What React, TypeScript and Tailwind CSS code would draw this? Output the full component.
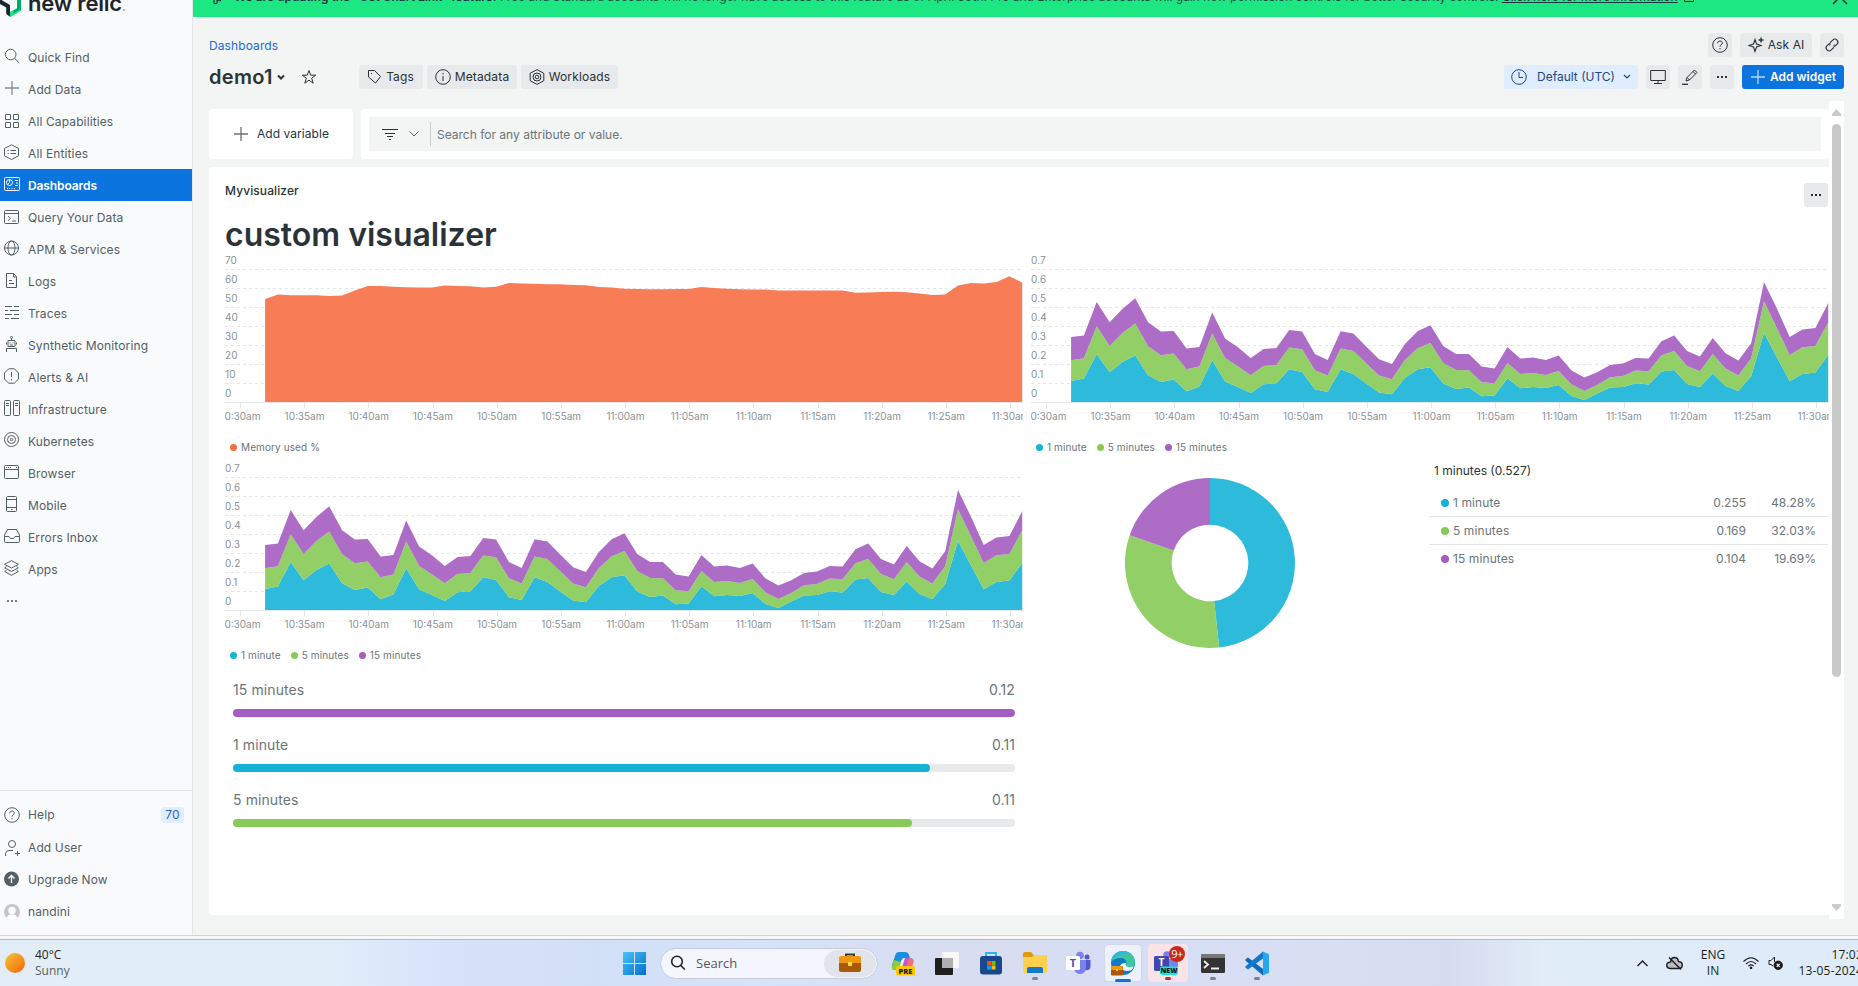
import React from "react";

type IconProps = { children: React.ReactNode; size?: number; className?: string };

const Icon = ({ children, size = 16, className = "" }: IconProps) => (
  <svg
    width={size}
    height={size}
    viewBox="0 0 16 16"
    fill="none"
    stroke="currentColor"
    strokeWidth="1"
    className={"shrink-0 " + className}
  >
    {children}
  </svg>
);

const icons: Record<string, React.ReactNode> = {
  search: (
    <>
      <circle cx="6.7" cy="6.5" r="5.3" />
      <path d="m10.6 10.5 4.6 4.3" />
    </>
  ),
  plus: <path d="M8 1v14M1 8h14" strokeWidth="1.3" opacity=".7" />,
  grid: <path d="M1.5 2.5h5v5h-5zM9.5 2.5h5v5h-5zM1.5 10.5h5v5h-5zM9.5 10.5h5v5h-5z" />,
  entities: (
    <>
      <path d="m7.5.8 7 3.600v7.400l-7 3.700-7-3.700V4.400z" />
      <path d="M6.500 6.500H12M6.500 9.500H12M3.500 6.500h1.300M3.500 9.500h1.300" />
    </>
  ),
  dashboards: (
    <>
      <rect x=".5" y="1.500" width="15" height="13" rx="1" />
      <circle cx="5.500" cy="6.500" r="3" />
      <path d="M5.500 3.500v3l-2 2M11 4.500h3M12 7h2M11 9.500h3M3 12.500h1M5 12.500h1M7.500 12.500h1M10 12.500h1" />
    </>
  ),
  query: (
    <>
      <rect x=".5" y="2.500" width="14" height="13" rx="1" />
      <path d="M.5 5.500h14M4 8l2.500 2.300L4 12.600M8 13h4" />
    </>
  ),
  globe: (
    <>
      <circle cx="7.500" cy="8" r="7" />
      <ellipse cx="7.500" cy="8" rx="3.500" ry="7" />
      <path d="M.5 8h14" />
    </>
  ),
  logs: <path d="M9.500 1.500h-7v14h10v-11zM9.500 1.500v3.500h3M5 8.500h3M5 11.500h5" />,
  traces: <path d="M1 2.500h7M10 2.500h5M1 6.500h3M6 6.500h9M1 10.500h7M10 10.500h5M1 14.500h4M7 14.500h8" />,
  synthetic: (
    <>
      <circle cx="7.500" cy="1.500" r="1" />
      <path d="M7.500 2.500v2M4 4.500h7v6H4zM2.500 6.500v2M12.500 6.500v2M6 6.500v1M9 6.500v1M6 9h3M2.500 16v-3.500h10V16" />
    </>
  ),
  alert: (
    <>
      <path d="m4.700.8h5.600l4.200 4.200v6l-4.200 4.200H4.700L.5 11V5z" />
      <path d="M7.500 4v5M7.500 11v1.500" />
    </>
  ),
  infra: (
    <>
      <rect x=".5" y=".5" width="6" height="15" rx="1" />
      <rect x="9.500" y=".5" width="6" height="15" rx="1" />
      <path d="M2 3.500h3M2 5.500h3M11 3.500h3M11 5.500h3" />
    </>
  ),
  kube: (
    <>
      <circle cx="7.500" cy="7.500" r="7" />
      <circle cx="7.500" cy="7.500" r="4" />
      <circle cx="7.500" cy="7.500" r="1.200" />
    </>
  ),
  browser: (
    <>
      <rect x=".5" y="1.500" width="14" height="13" rx="1" />
      <path d="M.5 5.500h14M2 3.500h1M4 3.500h1M6 3.500h1M12 3.500h1" />
    </>
  ),
  mobile: (
    <>
      <rect x="2.500" y=".5" width="10" height="15" rx="1" />
      <path d="M2.500 3.500h10M2.500 11.500h10M7 13.500h1.500" />
    </>
  ),
  inbox: <path d="M3.500 1.500h9L15.500 7v6.500q0 1-1 1h-13q-1 0-1-1V7zM.5 8.500h4.500l1.500 2h3l1.500-2h4.500" />,
  apps: (
    <path d="m7.500.6 7 3.700-7 3.700-7-3.700zM2.500 6.500.700 7.800l6.800 3.700 6.800-3.700-1.800-1.300M2.500 10.200.700 11.500l6.800 3.900 6.800-3.900-1.800-1.300" />
  ),
  question: (
    <>
      <circle cx="8" cy="8" r="7.3" />
      <path d="M5.700 6.300C5.700 4.900 6.600 4 8 4s2.300.9 2.300 2.100c0 1.600-2.300 1.800-2.300 3.400v.3M8 11v1.300" />
    </>
  ),
  userPlus: (
    <>
      <circle cx="8" cy="4" r="3.500" />
      <path d="M1.500 16v-2.500Q1.500 11 5 10.500h4M13.500 11v5M11 13.500h5" />
    </>
  ),
};

const navItems: [string, string][] = [
  ["search", "Quick Find"],
  ["plus", "Add Data"],
  ["grid", "All Capabilities"],
  ["entities", "All Entities"],
  ["dashboards", "Dashboards"],
  ["query", "Query Your Data"],
  ["globe", "APM & Services"],
  ["logs", "Logs"],
  ["traces", "Traces"],
  ["synthetic", "Synthetic Monitoring"],
  ["alert", "Alerts & AI"],
  ["infra", "Infrastructure"],
  ["kube", "Kubernetes"],
  ["browser", "Browser"],
  ["mobile", "Mobile"],
  ["inbox", "Errors Inbox"],
  ["apps", "Apps"],
];

const Dots = ({ className = "" }: { className?: string }) => (
  <svg width="10" height="2" viewBox="0 0 10 2" fill="currentColor" className={className}>
    <path d="M0 0h2v2H0zM4 0h2v2H4zM8 0h2v2H8z" />
  </svg>
);

const Sidebar = () => (
  <aside className="flex w-[193px] shrink-0 flex-col border-r border-[#e3e5e6] bg-[#f9fafc] text-[12px] tracking-[0.12px] text-[#535e65]">
    <div className="flex h-[41px] gap-[7px] overflow-hidden">
      <svg width="21" height="24" viewBox="0 0 21 24" className="mt-[-7px] shrink-0">
        <path d="M21 0v17.500L10 24v-4.700l7-4V0z" fill="#00ac69" />
        <path d="M21 16v1.500L10 24v-4.700l3.500-2v2.900z" fill="#1ce783" />
        <path d="M0 6.500V11l6.200 3.500V21L10 23.800V12L1.500 7z" fill="#1d252c" />
      </svg>
      <span className="mt-[-13px] h-8 text-[22px] leading-8 font-semibold tracking-[-0.2px] whitespace-nowrap text-[#1d252c]">
        new relic<span className="text-[12px] text-[#8e9494]">.</span>
      </span>
    </div>
    <nav className="flex flex-col">
      {navItems.map(([icon, label]) => (
        <a
          key={label}
          className={
            label === "Dashboards"
              ? "flex h-8 w-[192px] items-center gap-2 bg-[#0c74df] pl-1 font-semibold tracking-[-0.1px] text-white"
              : "flex h-8 w-[192px] items-center gap-2 pl-1"
          }
        >
          <Icon className="-mt-0.5">{icons[icon]}</Icon>
          <span className="pt-px">{label}</span>
        </a>
      ))}
    </nav>
    <Dots className="mt-[15px] ml-[7px] opacity-80" />
    <div className="mt-auto flex h-[145px] flex-col border-t border-[#e3e5e6] pt-2">
      <div className="mb-px flex h-8 items-center gap-2 pl-1">
        <Icon>{icons.question}</Icon>
        <span>Help</span>
        <span className="mr-2 ml-auto flex h-4 w-[23px] items-center justify-center rounded-[3px] bg-[#e0edff] text-[#2a66c8]">70</span>
      </div>
      <div className="flex h-8 items-center gap-2 pl-1">
        <Icon>{icons.userPlus}</Icon>
        <span>Add User</span>
      </div>
      <div className="flex h-8 items-center gap-2 pl-1">
        <Icon className="-mt-0.5">
          <circle cx="7.500" cy="8" r="7.500" fill="#535e65" stroke="none" />
          <path d="M7.500 12V5M4.500 7.500l3-3 3 3" stroke="#fff" strokeWidth="1.300" />
        </Icon>
        <span>Upgrade Now</span>
      </div>
      <div className="flex h-8 items-center gap-2 pl-1">
        <Icon className="rounded-full">
          <rect width="16" height="16" fill="#c4c6c8" stroke="none" />
          <circle cx="8" cy="6.500" r="3.700" fill="#fff" stroke="none" />
          <path d="M2 16q.5-4.500 4-5.500h4q3.500 1 4 5.500z" fill="#fff" stroke="none" />
        </Icon>
        <span>nandini</span>
      </div>
    </div>
  </aside>
);

const memory = [
  54.4, 56.7, 56.3, 56.3, 56.3, 55.9, 56.2, 58.8, 61.2, 61.2, 60.8, 60.6, 60.5, 60.5, 61.4, 61.2, 61.1, 60.5, 60.8, 62.8,
  62.6, 62.4, 62.1, 62.1, 61.7, 61.6, 60.7, 60.4, 59.8, 59.6, 59.5, 59.5, 59.6, 59.7, 60.7, 60.2, 59.8, 59.5, 59.3, 59.3,
  58.9, 58.9, 58.9, 58.8, 58.8, 58.9, 57.7, 57.8, 58.1, 58.2, 57.9, 57.2, 56.5, 56.8, 61.4, 62.8, 62.5, 63.3, 66.3, 63,
];

// Running totals for each minute: [1 minute, + 5 minutes, + 15 minutes], where 570 is a load of 1.
const load: [number, number, number][] = [
  [64, 126, 196], [71, 132, 200], [145, 228, 301], [90, 169, 240], [121, 208, 280], [140, 236, 312], [81, 168, 240],
  [61, 141, 212], [68, 146, 214], [33, 99, 161], [47, 107, 166], [126, 206, 269], [62, 133, 191], [46, 108, 165],
  [28, 81, 133], [54, 109, 160], [57, 112, 163], [99, 164, 217], [91, 159, 212], [39, 96, 145], [31, 80, 127],
  [99, 161, 213], [85, 154, 206], [56, 117, 167], [29, 80, 129], [24, 69, 115], [73, 126, 174], [99, 162, 213],
  [105, 178, 231], [56, 118, 169], [40, 97, 145], [44, 96, 145], [18, 60, 107], [20, 57, 101], [72, 118, 166],
  [42, 85, 131], [46, 88, 134], [43, 82, 127], [52, 94, 140], [19, 53, 95], [7, 34, 74], [26, 52, 90], [44, 75, 112],
  [46, 79, 116], [57, 95, 133], [53, 93, 131], [92, 141, 183], [97, 154, 200], [55, 109, 154], [46, 93, 137],
  [86, 145, 193], [49, 101, 147], [34, 80, 125], [79, 132, 177], [208, 303, 361], [135, 223, 281], [63, 142, 196],
  [85, 165, 218], [89, 169, 223], [142, 240, 297],
];

const BASE = 152.3;
const xAt = (i: number) => 14.4 + (i + 2) * 12.833;
const times = [
  "10:30am", "10:35am", "10:40am", "10:45am", "10:50am", "10:55am", "11:00am",
  "11:05am", "11:10am", "11:15am", "11:20am", "11:25am", "11:30am",
];

type Layer = { color: string; upper: number[]; lower: number[] };

const zero = load.map(() => 0);
const memoryLayers: Layer[] = [{ color: "#f76e43", upper: memory.map((v) => v * 1.9), lower: zero }];
const loadLayers: Layer[] = ["#17b3d6", "#86cb57", "#a45dc0"].map((color, k) => ({
  color,
  upper: load.map((p) => p[k] / 3),
  lower: k === 0 ? zero : load.map((p) => p[k - 1] / 3),
}));

const layerPath = ({ upper, lower }: Layer) => {
  const up = upper.map((v, i) => `${xAt(i).toFixed(1)},${(BASE - v).toFixed(1)}`);
  const down = lower.map((v, i) => `${xAt(i).toFixed(1)},${(BASE - v).toFixed(1)}`).reverse();
  return "M" + up.concat(down).join("L") + "Z";
};

type ChartProps = { labels: string[]; layers: Layer[]; legend: [string, string][] };

const AreaChart = ({ labels, layers, legend }: ChartProps) => (
  <div className="h-[208px] w-[798px] overflow-hidden">
    <svg width="798" height="180" viewBox="0 0 798 180" className="block font-['Inter',sans-serif]" fill="#8a9296" fontSize="10">
      {labels.map((label, i) => (
        <g key={label}>
          {i < 7 && <path d={`M0 ${19.5 + i * 19}H798`} stroke="#e3e5e6" strokeDasharray="3 3" />}
          <text x="0" y={14 + i * 19} letterSpacing=".1">{label}</text>
        </g>
      ))}
      {layers.map((layer) => (
        <path key={layer.color} d={layerPath(layer)} fill={layer.color} fillOpacity=".9" />
      ))}
      <path d="M0 152.500H798" stroke="#e3e5e6" />
      {times.map((time, i) => (
        <g key={time}>
          <path d={`M${Math.round(15 + i * 64.17) + 0.5} 153v5`} stroke="#e3e5e6" />
          <text x={15.4 + i * 64.17} y="170" textAnchor="middle">{time}</text>
        </g>
      ))}
    </svg>
    <div className="flex h-[34px] items-center gap-2.5 pl-[5px] text-[10px] tracking-[0.1px] text-[#6b757a]">
      {legend.map(([name, color]) => (
        <span key={name} className="flex items-center gap-1">
          <span className="h-[7px] w-[7px] rounded-full" style={{ backgroundColor: color }} />
          {name}
        </span>
      ))}
    </div>
  </div>
);

const loadLegend: [string, string][] = [
  ["1 minute", "#17b3d6"],
  ["5 minutes", "#86cb57"],
  ["15 minutes", "#a45dc0"],
];
const loadLabels = ["0.7", "0.6", "0.5", "0.4", "0.3", "0.2", "0.1", "0"];

const slices = [
  { name: "1 minute", color: "#17b3d6", value: "0.255", share: 48.28 },
  { name: "5 minutes", color: "#86cb57", value: "0.169", share: 32.03 },
  { name: "15 minutes", color: "#a45dc0", value: "0.104", share: 19.69 },
];

const slicePath = (from: number, to: number) => {
  const point = (share: number, r: number) => {
    const a = (share / 100) * Math.PI * 2;
    return `${(86 + r * Math.sin(a)).toFixed(2)} ${(86 - r * Math.cos(a)).toFixed(2)}`;
  };
  return `M${point(from, 85)}A85 85 0 0 1 ${point(to, 85)}L${point(to, 38.3)}A38.3 38.3 0 0 0 ${point(from, 38.3)}Z`;
};

const PiePanel = () => {
  let start = 0;
  return (
    <div className="flex h-[208px] w-[798px]">
      <div className="flex w-[398px] shrink-0 pt-[19px] pl-[93px]">
        <svg width="172" height="172" viewBox="0 0 172 172">
          {slices.map((s) => {
            const from = start;
            start += s.share;
            return <path key={s.name} d={slicePath(from, start)} fill={s.color} fillOpacity=".9" />;
          })}
        </svg>
      </div>
      <div className="flex grow flex-col pt-[5px] pr-px text-[12px] text-[#6b757a]">
        <div className="mb-[10px] h-4 pl-[5px] leading-4 text-[#293338]">1 minutes (0.527)</div>
        {slices.map((s, i) => (
          <div
            key={s.name}
            className={
              i < 2
                ? "flex h-7 items-center border-b border-[#e3e5e6] pt-px pr-3 pl-3"
                : "flex h-7 items-center pr-3 pl-3"
            }
          >
            <span className="mr-1 h-2 w-2 rounded-full" style={{ backgroundColor: s.color }} />
            <span className="grow tracking-[0.1px]">{s.name}</span>
            <span className="w-[60px] text-right">{s.value}</span>
            <span className="w-[70px] text-right">{s.share.toFixed(2)}%</span>
          </div>
        ))}
      </div>
    </div>
  );
};

const bars = [
  { name: "15 minutes", value: "0.12", width: 782, color: "#a45dc0" },
  { name: "1 minute", value: "0.11", width: 697, color: "#17b3d6" },
  { name: "5 minutes", value: "0.11", width: 679, color: "#86cb57" },
];

const BarPanel = () => (
  <div className="flex w-[798px] flex-col pt-[13px] pl-2">
    {bars.map((b) => (
      <div key={b.name} className="flex h-[55px] w-[782px] flex-col">
        <div className="flex h-[30px] items-center justify-between pb-[9px] text-[14px] tracking-[0.1px] text-[#6b757a]">
          <span>{b.name}</span>
          <span>{b.value}</span>
        </div>
        <div className="h-2 overflow-hidden rounded-full bg-[#e7e9ea]">
          <div className="h-2 rounded-r-full" style={{ width: b.width, backgroundColor: b.color }} />
        </div>
      </div>
    ))}
  </div>
);

const btn = "flex h-6 items-center justify-center rounded-[3px] bg-[#e7e9ea] text-[#293338]";

const Header = () => (
  <header className="flex h-[84px] shrink-0 flex-col gap-2 pt-4 pr-[14px] pl-4 text-[12px] text-[#293338]">
    <div className="flex h-6 items-center">
      <a className="pt-0.5 tracking-[0.1px] text-[#1a6bd6]">Dashboards</a>
      <div className="ml-auto flex gap-2">
        <span className={btn + " w-6"}><Icon className="mr-px">{icons.question}</Icon></span>
        <span className={btn + " w-[72px] gap-1 tracking-[0.1px]"}>
          <Icon>
            <path d="M7 2.500 8.500 7 13 8.500 8.500 10 7 14.500 5.500 10 1 8.500 5.500 7z" strokeWidth="1.100" />
            <path d="M13 .5v5M10.500 3h5" strokeWidth="1.400" />
          </Icon>
          Ask AI
        </span>
        <span className={btn + " w-6"}>
          <Icon className="mr-px">
            <g transform="rotate(-45 8 8)" strokeWidth="1.100">
              <path d="M7 5H4a3 3 0 0 0 0 6h3a3 3 0 0 0 2.800-2" />
              <path d="M9 11h3a3 3 0 0 0 0-6H9a3 3 0 0 0-2.800 2" />
            </g>
          </Icon>
        </span>
      </div>
    </div>
    <div className="flex h-6 items-center">
      <h1 className="w-[64px] text-[20px] font-semibold tracking-[0.3px] whitespace-nowrap">demo1</h1>
      <svg width="8" height="6" viewBox="0 0 8 6" className="ml-1" fill="none" stroke="#293338" strokeWidth="2"><path d="m1 1.500 3 3 3-3" /></svg>
      <Icon className="ml-4"><path d="m8 1.500 1.700 4.700h5l-4 3 1.500 5L8 11.200l-4.200 3 1.500-5-4-3h5z" /></Icon>
      <div className="ml-[42px] flex gap-1">
        <span className={btn + " w-[64px] gap-[4px] pr-0.5 tracking-[0.1px]"}>
          <Icon>
            <path d="M2.500 1.500h6l6 6-5 6.500-7-6z" strokeLinejoin="round" />
            <path d="M5 4.500h1" />
          </Icon>
          Tags
        </span>
        <span className={btn + " w-[90px] gap-1 tracking-[0.15px]"}>
          <Icon><circle cx="8" cy="8" r="7.300" /><path d="M8 7v5M8 4v1.500" /></Icon>
          Metadata
        </span>
        <span className={btn + " w-[97px] gap-1 tracking-[0.15px]"}>
          <Icon><path d="m8 .6 6.800 3.700v7.400L8 15.400 1.200 11.700V4.300z" /><circle cx="8" cy="8" r="4" /><circle cx="8" cy="8" r="1.800" /></Icon>
          Workloads
        </span>
      </div>
      <div className="ml-auto flex gap-2">
        <span className="flex h-6 w-[134px] items-center rounded-[3px] bg-[#e0edff] pl-[7px] text-[#1d4a85]">
          <Icon className="mr-[10px]"><circle cx="8" cy="8" r="7.300" /><path d="M8 3v5.500h4" /></Icon>
          Default (UTC)
          <svg width="8" height="6" viewBox="0 0 8 6" className="ml-[8px]" fill="none" stroke="currentColor" strokeWidth="1.200"><path d="m1 1 3 3 3-3" /></svg>
        </span>
        <span className={btn + " w-6"}><Icon><path d="M.7 1.500h14.600v10H.7zM8 11.500v3M4 14.500h8" /></Icon></span>
        <span className={btn + " w-6"}><Icon><path d="m4 12 1-3.500 7.500-7.500 2.500 2.500L7.500 11zM11 2.500 13.500 5M5 8.500 7.500 11" /><path d="M0 15.300h6" strokeWidth="1.300" /></Icon></span>
        <span className={btn + " w-6"}><Dots /></span>
        <span className="flex h-6 w-[102px] items-center gap-1 rounded-[3px] bg-[#0c74df] pl-2 font-semibold text-white">
          <Icon>{icons.plus}</Icon>
          Add widget
        </span>
      </div>
    </div>
  </header>
);

const Banner = () => (
  <div className="flex h-[17px] shrink-0 items-start overflow-hidden bg-[#1ce783] text-[12px] tracking-[-0.015px] text-[#1d4d3c]">
    <div className="mt-[-11px] flex h-4 w-full items-center leading-4 whitespace-nowrap">
      <Icon className="ml-[17px] text-[#1d252c]"><path d="M1.500 9.500v-5l9-3v10.500l-9-3M4 10.500v4h3v-3.500M13 5h2M13 8l2 1.500" /></Icon>
      <span className="ml-2">
        <b className="font-semibold text-[#1d353c]">We are updating the "Get Chart Link" feature.</b>{" "}
        Free and Standard accounts will no longer have access to this feature as of April 30th. Pro and Enterprise accounts
        will gain new permission controls for better security controls.{" "}
        <span className="text-[#1d353c] underline">Click here for more information</span>
      </span>
      <svg width="10" height="10" viewBox="0 0 10 10" className="ml-[6px]" fill="none" stroke="#1d252c"><path d="M.5.500h9v9h-9z" /></svg>
      <Icon className="mr-[10px] ml-auto text-[#1d252c]"><path d="M1 1l14 14M15 1 1 15" strokeWidth="1.400" /></Icon>
    </div>
  </div>
);

const Scrollbar = () => (
  <div className="flex h-[818px] w-[15px] shrink-0 flex-col items-center bg-white pt-2 pb-2">
    <svg width="9" height="7" viewBox="0 0 9 7" fill="#c9cacb"><path d="M4.500 0 9 5v2H0V5z" /></svg>
    <div className="mt-2 h-[553px] w-[9px] rounded-full bg-[#c9c9c9]" />
    <svg width="9" height="7" viewBox="0 0 9 7" fill="#c9cacb" className="mt-auto"><path d="M4.500 7 9 2V0H0v2z" /></svg>
  </div>
);

const Content = () => (
  <div className="flex h-[818px] pl-4">
    <div className="flex w-[1620px] shrink-0 flex-col gap-2 pt-2 text-[#293338]">
      <div className="flex h-[50px] gap-2">
        <div className="flex w-[144px] items-center rounded bg-white pl-6 text-[12px] tracking-[0.05px]">
          <Icon className="mr-2">{icons.plus}</Icon>
          Add variable
        </div>
        <div className="grow rounded bg-white p-2">
          <div className="flex h-[34px] items-center bg-[#f3f4f4] pl-[13px]">
            <Icon><path d="M0 3.500h16M3 7.500h10M5 10.500h6M7 13.500h2" strokeWidth="1.200" /></Icon>
            <svg width="10" height="6" viewBox="0 0 10 6" className="ml-[11px]" fill="none" stroke="#535e65"><path d="m.5.5 4.500 4.500L9.500.500" /></svg>
            <span className="ml-[11px] h-6 w-px bg-[#c9cdcf]" />
            <span className="ml-1.5 pt-px text-[12px] text-[#6b757a]">Search for any attribute or value.</span>
          </div>
        </div>
      </div>
      <section className="flex h-[748px] flex-col rounded-l bg-white pl-4">
        <div className="flex h-10 items-start justify-between pt-4 pr-px">
          <span className="h-4 text-[12px] leading-4 font-medium tracking-[0.1px]">Myvisualizer</span>
          <span className={btn + " w-6"}><Dots /></span>
        </div>
        <h2 className="h-[43px] pt-2 text-[32px] leading-[40px] font-semibold whitespace-nowrap">custom visualizer</h2>
        <div className="grid grid-cols-[798px_798px] gap-x-2">
          <AreaChart labels={["70", "60", "50", "40", "30", "20", "10", "0"]} layers={memoryLayers} legend={[["Memory used %", "#f76e43"]]} />
          <AreaChart labels={loadLabels} layers={loadLayers} legend={loadLegend} />
          <AreaChart labels={loadLabels} layers={loadLayers} legend={loadLegend} />
          <PiePanel />
          <BarPanel />
        </div>
      </section>
    </div>
    <Scrollbar />
  </div>
);

const Slot = ({ children, className = "w-[38px]" }: { children: React.ReactNode; className?: string }) => (
  <div className={"relative flex h-[38px] shrink-0 items-center justify-center rounded " + className}>{children}</div>
);
const Running = () => <span className="absolute bottom-0.5 left-1/2 h-[3px] w-[6px] -translate-x-1/2 rounded-full bg-[#7d8290]" />;

const Briefcase = ({ size }: { size: number }) => (
  <svg width={size} height={size} viewBox="0 0 24 24">
    <path d="M8 6V3.500h8V6" fill="none" stroke="#3b3a39" strokeWidth="2" />
    <rect x="1" y="5" width="22" height="9" rx="2" fill="#f0960f" />
    <path d="M1 12h22v7q0 2-2 2H3q-2 0-2-2z" fill="#a85a06" />
    <rect x="10" y="11" width="4" height="4" fill="#ffd83a" />
  </svg>
);

const TeamsLogo = () => (
  <svg width="26" height="24" viewBox="0 0 26 24">
    <circle cx="21" cy="6" r="2.500" fill="#5059c9" />
    <circle cx="14" cy="4.500" r="3.800" fill="#7b83eb" />
    <path d="M17 9h7.500v7q-1 4-6 3z" fill="#5059c9" />
    <path d="M9 9h11v8q-1 6-6 6t-6-6z" fill="#7b83eb" />
    <rect x="0" y="5" width="14" height="14" rx="1.500" fill="#fff" />
    <text x="7" y="16" fontSize="11" fontWeight="700" textAnchor="middle" fill="#4b53bc">T</text>
  </svg>
);

const Taskbar = () => (
  <footer className="flex h-[47px] shrink-0 items-center overflow-hidden border-t border-[#b1b7c6] bg-[linear-gradient(90deg,#e2edf7_0%,#e1edf9_18%,#d7e3fa_24%,#d2e0f7_32%,#d6e3fb_41%,#d8dcef_52%,#d6def6_62%,#d9def2_72%,#d7dbef_78%,#e1ecf8_83%,#deebf8_100%)] font-['Open_Sans','Noto_Sans',sans-serif] text-[12px] text-[#1c1d20]">
    <div className="flex w-[619px] shrink-0 items-center gap-[10px] pl-[5px]">
      <span className="h-5 w-5 rounded-full bg-linear-to-br from-[#f4c534] to-[#f0600c]" />
      <span className="flex flex-col leading-4"><span>40°C</span><span className="text-[#5c6066]">Sunny</span></span>
    </div>
    <svg width="23" height="23" viewBox="0 0 23 23" className="ml-1 shrink-0">
      <defs><linearGradient id="win" x1="0" y1="0" x2="1" y2="1"><stop stopColor="#4cc2f5" /><stop offset="1" stopColor="#0070cf" /></linearGradient></defs>
      <path d="M0 0h11v11H0zM12 0h11v11H12zM0 12h11v11H0zM12 12h11v11H12z" fill="url(#win)" />
    </svg>
    <div className="ml-[14px] flex h-[31px] w-[218px] shrink-0 items-center rounded-full border border-[#c7ccdb] bg-[#f3f6fd] pl-[9px]">
      <svg width="16" height="16" viewBox="0 0 16 16" fill="none" stroke="#222" strokeWidth="1.600"><circle cx="7" cy="6.500" r="5.300" /><path d="m10.800 10.500 4 4" /></svg>
      <span className="ml-[10px] pt-px text-[13px] text-[#55585e]">Search</span>
      <span className="mr-px ml-auto flex h-[27px] w-[52px] items-center justify-center rounded-full bg-[#e1e4ea]"><Briefcase size={24} /></span>
    </div>
    <div className="ml-[6px] flex shrink-0 items-center gap-[6px]">
      <Slot>
        <svg width="26" height="25" viewBox="0 0 26 25">
          <path d="M9 1h6q3 0 4 3l1 3h-5q-3 0-4 3L8 19H5q-4 0-3-5L5 5q1-4 4-4z" fill="#1a8fe0" />
          <path d="M4 9l-2 6q-1 4 3 4h4l2-8z" fill="#8ccf3b" />
          <path d="M15 7h5q4 0 3.500 4l-2 6q-1 3-4 3h-7l3-10q.5-3 1.500-3z" fill="#c356d4" />
          <path d="M19 7q5 0 4 5l-2 5h-5z" fill="#f0727a" />
          <path d="M15 7l-4 12H9l3-10q.5-2 3-2z" fill="#f3f6fd" />
          <rect x="6" y="15" width="19" height="9.500" rx="2" fill="#ffc700" />
          <text x="15.500" y="22.500" fontSize="7.500" fontWeight="800" textAnchor="middle" fill="#222">PRE</text>
        </svg>
      </Slot>
      <Slot>
        <svg width="24" height="23" viewBox="0 0 24 23"><rect x="0" y="6" width="18" height="17" rx="1" fill="#202020" /><rect x="7" y="0" width="17" height="16" rx="1" fill="#f8f8f8" /><path d="M7 6h11v10H7z" fill="#b0b0b0" /></svg>
      </Slot>
      <Slot>
        <svg width="24" height="24" viewBox="0 0 24 24"><path d="M7 6V2h10v4" fill="none" stroke="#2eb4ef" strokeWidth="2" /><rect x="1" y="5" width="22" height="18.500" rx="3" fill="#17498c" /><path d="M8 10h4v4H8z" fill="#f25022" /><path d="M12.500 10h4v4h-4z" fill="#7fba00" /><path d="M8 14.500h4v4H8z" fill="#00a4ef" /><path d="M12.500 14.500h4v4h-4z" fill="#ffb900" /></svg>
      </Slot>
      <Slot>
        <svg width="24" height="22" viewBox="0 0 24 22"><path d="M0 2q0-2 2-2h6l3 3h11q2 0 2 2v12H0z" fill="#dd9a14" /><path d="M0 5h9l2-2h11q2 0 2 2v14q0 2-2 2H2q-2 0-2-2z" fill="#ffd04f" /><path d="M4 21v-4q0-2 2-2h12q2 0 2 2v4z" fill="#1479c9" /></svg>
        <Running />
      </Slot>
      <Slot><TeamsLogo /></Slot>
      <Slot className="w-[38px] border border-[#d3d8e8] bg-[#edf1fb]">
        <svg width="24" height="25" viewBox="0 0 24 25">
          <circle cx="12" cy="12" r="12" fill="#1478c8" />
          <path d="M0 11C1 4 6 0 12 0c7 0 12 5 12 11 0 4-3 6-6 6-3.500 0-4-2-3-3 1.500-2 0-7-5-7-4 0-8 1-10 4z" fill="#3cc7a3" />
          <path d="M0 11C1 4 6 0 12 0c3 0 5 1 7 2.500C11 3 3 5 0 11z" fill="#33b5e0" />
          <path d="M15 12q-1 3 2 4 3 1 6-1l-2 4q-8 3-12-3 0-4 6-4z" fill="#edf1fb" />
          <rect x="0" y="15" width="12" height="9.500" rx="1" fill="#a85a06" /><rect x="0" y="15" width="12" height="4" rx="1" fill="#f0960f" /><rect x="5" y="18" width="2" height="2" fill="#ffd83a" />
        </svg>
        <span className="absolute -bottom-px left-1/2 h-[3px] w-4 -translate-x-1/2 rounded-full bg-[#0c74d6]" />
      </Slot>
      <Slot className="w-[40px] bg-[#fae3e6]">
        <svg width="24" height="24" viewBox="0 0 24 24" className="mr-1"><circle cx="13" cy="4" r="3.800" fill="#7b83eb" /><path d="M8 8h16v7q-2 7-9 6t-7-7z" fill="#7b83eb" /><rect x="0" y="5" width="15" height="15" rx="1.500" fill="#4147ad" /><text x="7.500" y="15" fontSize="10" fontWeight="700" textAnchor="middle" fill="#fff">T</text><rect x="6" y="15.500" width="18" height="8.500" rx="2" fill="#1fe4e0" /><text x="15" y="22.300" fontSize="7" fontWeight="800" textAnchor="middle" fill="#111">NEW</text></svg>
        <span className="absolute top-[2px] right-[3px] flex h-4 w-4 items-center justify-center rounded-full bg-[#c52b20] text-[11px] tracking-[-0.5px] text-white">9+</span>
        <span className="absolute bottom-0.5 left-1/2 h-[3px] w-[6px] -translate-x-1/2 rounded-full bg-[#c52b20]" />
      </Slot>
      <Slot>
        <svg width="24" height="19" viewBox="0 0 24 19"><rect width="24" height="19" rx="1.500" fill="#333" /><path d="M0 4V1.500Q0 0 1.500 0h21Q24 0 24 1.500V4z" fill="#777" /><path d="m3 7 4 3.500L3 14M10 14.500h8" fill="none" stroke="#eee" strokeWidth="1.800" /></svg>
        <Running />
      </Slot>
      <Slot>
        <svg width="25" height="25" viewBox="0 0 25 25"><path d="M.5 8.200 3 6.500 18 18v6.500L.5 9.800z" fill="#0a6cbd" /><path d="M18 .5V7.500L3 18.500.5 16.800v-1.500z" fill="#1479c9" /><path d="m18 .5 6 2.700v18.600l-6 2.700z" fill="#29a6f0" /></svg>
        <Running />
      </Slot>
    </div>
    <div className="ml-auto flex shrink-0 items-center whitespace-nowrap">
      <svg width="11" height="7" viewBox="0 0 11 7" fill="none" stroke="#1c1d20" strokeWidth="1.400"><path d="m.5 6 5-5 5 5" /></svg>
      <svg width="17" height="14" viewBox="0 0 17 14" className="ml-[18px]" fill="none" stroke="#1c1d20" strokeWidth="1.400"><path d="M4 12.500Q.7 12.300.7 9.300T4.500 6Q5 1.500 8.500 1.500T12.500 5.500q3.800.3 3.800 3.500T13 12.500z" fill="#b9bcc0" /><path d="m3 1.500 12 12" /></svg>
      <span className="ml-[18px] flex w-[24px] flex-col items-center leading-4"><span>ENG</span><span>IN</span></span>
      <svg width="16" height="12" viewBox="0 0 16 12" className="ml-[18px]" fill="none" stroke="#1c1d20" strokeWidth="1.100"><path d="M.5 4.500q7.500-7.500 15 0M3 7q5-5 10 0M5.300 9.200q2.700-2.600 5.400 0" /><circle cx="8" cy="10.800" r=".8" fill="#1c1d20" /></svg>
      <svg width="15" height="14" viewBox="0 0 15 14" className="ml-[9px]" fill="none" stroke="#1c1d20"><path d="M5 10 3 8.500H1v-4h2L6.500 1v5" /><circle cx="10.200" cy="9.300" r="4.200" fill="#1c1d20" /><path d="m8.700 7.800 3 3m0-3-3 3" stroke="#fff" strokeWidth="1.200" /></svg>
      <span className="-mr-[5px] ml-[16px] flex w-[64px] flex-col items-end leading-4 tracking-[0.2px]"><span>17:02</span><span>13-05-2024</span></span>
    </div>
  </footer>
);

export default function App() {
  return (
    <div className="flex h-[986px] w-[1858px] flex-col overflow-hidden bg-[#f7f8f9] font-['Inter',sans-serif]">
      <div className="mb-[3px] flex h-[936px] shrink-0 overflow-hidden border-b border-[#d3d7d6] bg-[#f3f4f4]">
        <Sidebar />
        <main className="flex min-w-0 grow flex-col">
          <Banner />
          <Header />
          <Content />
        </main>
      </div>
      <Taskbar />
    </div>
  );
}
